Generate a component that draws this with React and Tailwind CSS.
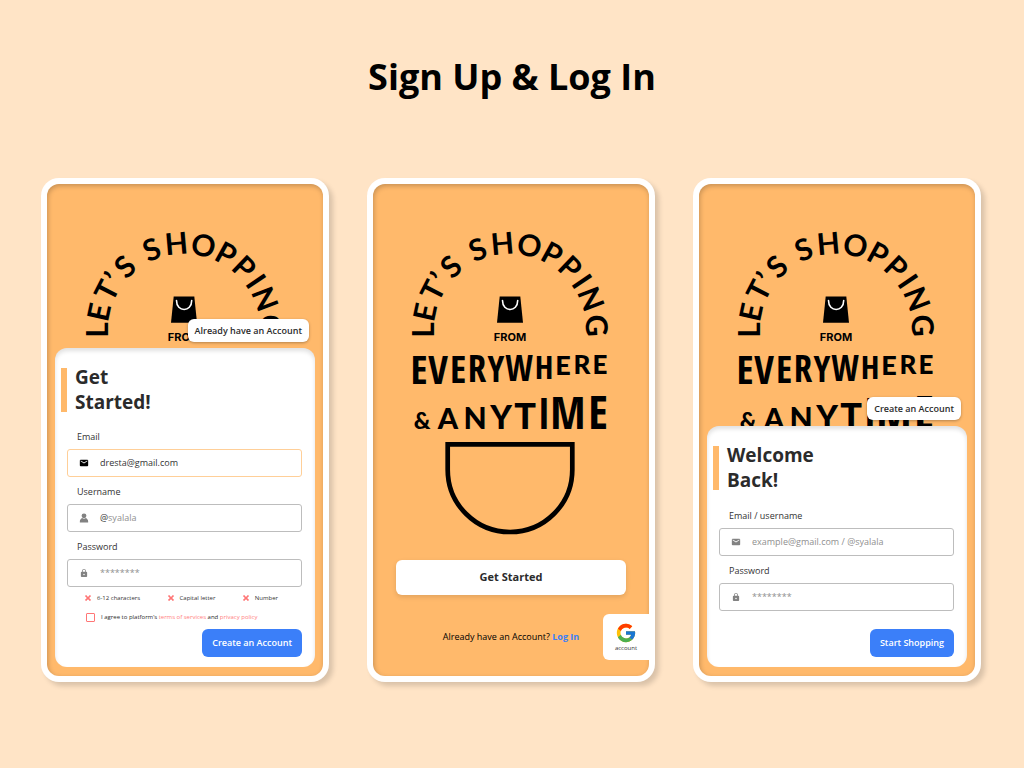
import { useId } from "react";
import { MdEmail } from "react-icons/md";
import { IoMdLock } from "react-icons/io";
import { ImCross } from "react-icons/im";
import { FcGoogle } from "react-icons/fc";

// letter, angle from the top of the arch
const ARC = [
  ["L", -90],
  ["E", -78],
  ["T", -63],
  ["’", -54],
  ["S", -43],
  ["S", -22],
  ["H", -5],
  ["O", 13],
  ["P", 29],
  ["P", 44],
  ["I", 56],
  ["N", 69],
  ["G", 87],
];

const NARROW =
  "font-['Noto_Sans_ExtraCondensed','Open_Sans_Condensed','Roboto_Condensed','Liberation_Sans_Narrow',sans-serif] font-bold";
const WIDE = "font-['Lato',sans-serif] font-black";

// letter, centre x, font size, face
const EVERYWHERE = [
  ["E", 9, 40, NARROW],
  ["V", 28, 39, NARROW],
  ["E", 48, 38, NARROW],
  ["R", 67, 37, NARROW],
  ["Y", 86, 36, NARROW],
  ["W", 109, 35, NARROW],
  ["H", 134, 33, NARROW],
  ["E", 153, 27, WIDE],
  ["R", 172, 26, WIDE],
  ["E", 190, 26, WIDE],
];

const ANYTIME = [
  ["&", 12, 23, WIDE],
  ["A", 38, 29, WIDE],
  ["N", 65, 30, WIDE],
  ["Y", 91, 33, WIDE],
  ["T", 115, 36, WIDE],
  ["I", 134, 43, NARROW],
  ["M", 158, 45, NARROW],
  ["E", 188, 46, NARROW],
];

function Artwork({ tagline = true }) {
  return (
    <svg
      viewBox="0 0 202 306"
      className="w-[202px] shrink-0"
      role="img"
      aria-label="Let’s shopping from everywhere and anytime"
    >
      <g textAnchor="middle" className="font-['Lato',sans-serif] text-[30px] font-bold">
        {ARC.map(([ch, angle], i) => (
          <text key={i} x="100" y="24" transform={`rotate(${angle} 100 100)`}>
            {ch}
          </text>
        ))}
      </g>
      <path d="M89.7 66.6H110.3L113 92.8H87Z" />
      <path
        d="M92.5 70.5C92.5 82.5 107.7 82.5 107.7 70.5"
        fill="none"
        stroke="#fff"
        strokeWidth="1.6"
        strokeLinecap="round"
      />
      <text
        x="100"
        y="111"
        textAnchor="middle"
        className="font-['Inter',sans-serif] text-[11px] font-bold"
      >
        FROM
      </text>
      {tagline && (
        <g textAnchor="middle">
          {EVERYWHERE.map(([ch, x, size, face], i) => (
            <text key={i} x={x} y={126 + Math.round(size * 0.71)} fontSize={size} className={face}>
              {ch}
            </text>
          ))}
          {ANYTIME.map(([ch, x, size, face], i) => (
            <text key={i} x={x} y="199" fontSize={size} className={face}>
              {ch}
            </text>
          ))}
          <path
            d="M37.7 214.4H162.3V239.7A62.3 62.3 0 0 1 37.7 239.7Z"
            fill="none"
            stroke="#000"
            strokeWidth="4.7"
          />
        </g>
      )}
    </svg>
  );
}

function PersonIcon({ className }) {
  return (
    <svg viewBox="0 0 20 20" fill="currentColor" className={className} aria-hidden="true">
      <circle cx="10" cy="5.6" r="4.8" />
      <path d="M6.5 10.2C7.5 11.2 8.7 11.6 10 11.6C11.3 11.6 12.5 11.2 13.5 10.2C16.5 11.5 18.3 14 18.3 17V19H1.7V17C1.7 14 3.5 11.5 6.5 10.2Z" />
    </svg>
  );
}

function Phone({ label, children }) {
  return (
    <section
      aria-label={label}
      className="rounded-[18px] bg-white p-1.5 shadow-[4px_4px_5px_rgba(0,0,0,0.15)]"
    >
      <div className="grid h-full overflow-hidden rounded-xl bg-[#ffb96b] shadow-[inset_1px_2px_5px_rgba(0,0,0,0.22)]">
        {children}
      </div>
    </section>
  );
}

function SheetPhone({ label, tagline, switchText, title, children }) {
  return (
    <Phone label={label}>
      <div className="col-start-1 row-start-1 flex items-start justify-center pt-[46px]">
        <Artwork tagline={tagline} />
      </div>
      <div className="z-10 col-start-1 row-start-1 mx-2 mb-[9px] flex flex-col items-end justify-end gap-1.5">
        <button
          type="button"
          className="mr-1.5 h-[23px] rounded-md bg-white px-[7px] text-[9px] font-semibold text-[#2b2b2b] shadow-[0_1px_3px_rgba(0,0,0,0.3)]"
        >
          {switchText}
        </button>
        <form className="flex w-full flex-col rounded-xl bg-white pt-[17px] pr-[13px] pb-2.5 pl-3 shadow-[inset_0_3px_4px_rgba(0,0,0,0.12)]">
          <div className="-ml-1.5 flex items-center gap-2">
            <span className="h-11 w-1.5 bg-[#ffb96b]" />
            <h2 className="text-[19px] leading-[25px] font-bold whitespace-pre-line text-[#2b2b2b]">
              {title}
            </h2>
          </div>
          {children}
        </form>
      </div>
    </Phone>
  );
}

function Field({ label, icon: Icon, type = "text", active, prefix, placeholder, value }) {
  const id = useId();
  return (
    <div className="flex flex-col gap-1">
      <label htmlFor={id} className="pl-2.5 text-[9px] leading-4 text-[#333333]">
        {label}
      </label>
      <div
        className={
          active
            ? "flex h-7 items-center gap-[11px] rounded-[3px] border border-[#ffcf98] pl-[11px]"
            : "flex h-7 items-center gap-[11px] rounded-[3px] border border-[#bdbdbd] pl-[11px]"
        }
      >
        <Icon className={active ? "size-2.5 text-black" : "size-2.5 text-[#828282]"} />
        <div className="flex min-w-0 flex-1 items-center text-[9px] text-[#333333]">
          {prefix && <span>{prefix}</span>}
          <input
            id={id}
            type={type}
            defaultValue={value}
            placeholder={placeholder}
            className="min-w-0 flex-1 bg-transparent outline-none placeholder:text-[#8f8f8f]"
          />
        </div>
      </div>
    </div>
  );
}

function Submit({ children }) {
  return (
    <button
      type="submit"
      className="h-7 self-end rounded-md bg-[#3b7ff9] px-2.5 text-[9px] font-semibold text-white"
    >
      {children}
    </button>
  );
}

export default function App() {
  return (
    <main className="min-h-screen bg-[#ffe4c6] pt-[52px] pb-20 font-['Open_Sans',sans-serif] text-black">
      <h1 className="text-center text-4xl leading-[50px] font-bold">Sign Up &amp; Log In</h1>
      <div className="mt-[76px] grid grid-cols-3 gap-[38px] pr-[43px] pl-[41px]">
        <SheetPhone
          label="Sign up"
          tagline={false}
          switchText="Already have an Account"
          title={"Get\nStarted!"}
        >
          <div className="mt-3.5 flex flex-col gap-[7px]">
            <Field label="Email" icon={MdEmail} type="email" active value="dresta@gmail.com" />
            <Field label="Username" icon={PersonIcon} prefix="@" placeholder="syalala" />
            <Field label="Password" icon={IoMdLock} type="password" placeholder="********" />
          </div>
          <ul className="mt-[5px] flex h-3 items-center justify-between pr-6 pl-[18px] text-[6px] text-[#333333]">
            {["6-12 characters", "Capital letter", "Number"].map((rule) => (
              <li key={rule} className="flex items-center gap-1.5">
                <ImCross className="size-1.5 text-[#ff7676]" />
                {rule}
              </li>
            ))}
          </ul>
          <div className="mt-[7px] mb-1.5 flex h-3 items-center gap-1.5 pl-[19px] text-[6px] text-[#2b2b2b]">
            <input
              id="agree"
              type="checkbox"
              className="size-[9px] appearance-none rounded-[1px] border border-solid border-[#ff7676] bg-white checked:bg-[#ff7676]"
            />
            <label htmlFor="agree">
              I agree to platform’s{" "}
              <a href="#terms" className="text-[#ff8080]">
                terms of services
              </a>{" "}
              and{" "}
              <a href="#privacy" className="text-[#ff8080]">
                privacy policy
              </a>
            </label>
          </div>
          <Submit>Create an Account</Submit>
        </SheetPhone>

        <Phone label="Welcome">
          <div className="flex flex-col pt-[46px] pb-4">
            <div className="flex justify-center">
              <Artwork />
            </div>
            <button
              type="button"
              className="mx-[23px] mt-6 h-[35px] rounded-md bg-white text-[11px] font-bold text-[#2b2b2b] shadow-[0_2px_5px_rgba(0,0,0,0.12)]"
            >
              Get Started
            </button>
            <div className="mt-[19px] grid grid-cols-[1fr_auto_1fr] items-center">
              <p className="col-start-2 text-[9px]">
                Already have an Account?{" "}
                <a href="#login" className="font-bold text-[#3b7ff9]">
                  Log In
                </a>
              </p>
              <button
                type="button"
                className="flex size-[46px] flex-col items-center justify-center justify-self-end rounded-l-md bg-white text-[6px] leading-2 text-[#333333]"
              >
                <FcGoogle className="size-[22px]" />
                account
              </button>
            </div>
          </div>
        </Phone>

        <SheetPhone label="Log in" switchText="Create an Account" title={"Welcome\nBack!"}>
          <div className="mt-[15px] mb-[18px] flex flex-col gap-[7px]">
            <Field label="Email / username" icon={MdEmail} placeholder="example@gmail.com / @syalala" />
            <Field label="Password" icon={IoMdLock} type="password" placeholder="********" />
          </div>
          <Submit>Start Shopping</Submit>
        </SheetPhone>
      </div>
    </main>
  );
}
